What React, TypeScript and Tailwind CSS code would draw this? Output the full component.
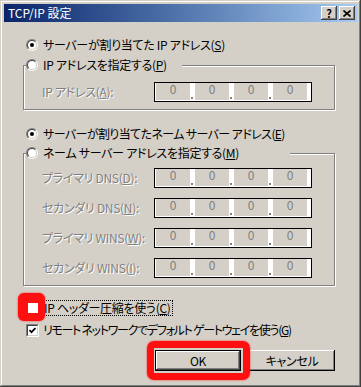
import { Fragment } from 'react';

const raised =
  'shadow-[inset_-1px_-1px_#404040,inset_1px_1px_#ffffff,inset_-2px_-2px_#808080,inset_2px_2px_#d4d0c8]';
const grayText = 'text-[#808080] [text-shadow:1px_1px_0_#ffffff]';

function Radio({ checked }: { checked?: boolean }) {
  return (
    <div className="h-[12px] w-[12px] shrink-0 rounded-full border border-t-[#808080] border-l-[#808080] border-b-white border-r-white">
      <div className="flex h-[10px] w-[10px] items-center justify-center rounded-full border border-t-[#404040] border-l-[#404040] border-b-[#d4d0c8] border-r-[#d4d0c8] bg-white">
        {checked && <div className="h-[4px] w-[4px] rounded-full bg-black" />}
      </div>
    </div>
  );
}

function Checkbox({ checked }: { checked?: boolean }) {
  return (
    <div className="h-[13px] w-[13px] shrink-0 border border-t-[#808080] border-l-[#808080] border-b-white border-r-white">
      <div className="flex h-[11px] w-[11px] items-center justify-center border border-t-[#404040] border-l-[#404040] border-b-[#d4d0c8] border-r-[#d4d0c8] bg-white">
        {checked && (
          <svg width="7" height="7" viewBox="0 0 7 7">
            <polyline points="0.5,3 2.5,5.2 6.5,1" fill="none" stroke="#000" strokeWidth="1.7" />
          </svg>
        )}
      </div>
    </div>
  );
}

function IpField() {
  return (
    <div className="flex h-[20px] w-[158px] border border-black bg-white pb-[1px] pl-[1px]">
      {[0, 1, 2, 3].map((i) => (
        <Fragment key={i}>
          {i > 0 && (
            <div className="flex w-[5px] items-end pb-[1px] pl-[1px]">
              <div className="h-[2px] w-[2px] bg-[#808080]" />
            </div>
          )}
          <div className="w-[34px] bg-[#d4d0c8] pt-[1px] text-center text-[12px] leading-[10px] tracking-normal text-[#808080]">
            0
          </div>
        </Fragment>
      ))}
    </div>
  );
}

function FieldRow({ label, k, rest }: { label: string; k: string; rest: string }) {
  return (
    <div className="flex h-[20px] items-center">
      <span className={`w-[112px] ${grayText}`}>
        {label}(<u>{k}</u>){rest}
      </span>
      <IpField />
    </div>
  );
}

export default function App() {
  return (
    <div className="flex h-[387px] w-[361px] flex-col bg-[#d4d0c8] p-[4px] font-['Noto_Sans_CJK_JP',sans-serif] text-[12px] leading-[14px] tracking-[-0.3px] text-black [font-feature-settings:'palt'] shadow-[inset_-1px_-1px_#404040,inset_1px_1px_#d4d0c8,inset_-2px_-2px_#808080,inset_2px_2px_#ffffff]">
      <div className="flex h-[18px] items-center bg-gradient-to-r from-[#0a246a] to-[#a6caf0] pl-[4px] pr-[2px]">
        <span className="flex-1 text-[12px] tracking-normal text-white">TCP/IP 設定</span>
        <div className={`flex h-[14px] w-[16px] items-center justify-center bg-[#d4d0c8] text-[11px] font-bold leading-none ${raised}`}>
          ?
        </div>
        <div className={`ml-[2px] flex h-[14px] w-[16px] items-center justify-center bg-[#d4d0c8] ${raised}`}>
          <svg width="8" height="7" viewBox="0 0 8 7">
            <path d="M0.5 0.5 L7.5 6.5 M7.5 0.5 L0.5 6.5" stroke="#000" strokeWidth="1.6" />
          </svg>
        </div>
      </div>

      <div className="flex flex-col pl-[19px]">
        <div className="ml-[3px] mt-[16px] flex h-[14px] items-center gap-[5px]">
          <Radio checked />
          <span>
            サーバーが割り当てた IP アドレス(<u>S</u>)
          </span>
        </div>

        <div className="mt-[6px] flex flex-col">
          <div className="relative -mb-[7px] ml-[3px] flex h-[14px] w-[156px] items-center gap-[5px] bg-[#d4d0c8]">
            <Radio />
            <span>
              IP アドレスを指定する(<u>P</u>)
            </span>
          </div>
          <div className="w-[312px] border border-[#808080] pb-[7px] pl-[18px] pt-[16px] shadow-[inset_1px_1px_#ffffff,1px_1px_#ffffff]">
            <FieldRow label="IP アドレス" k="A" rest=":" />
          </div>
        </div>

        <div className="ml-[3px] mt-[17px] flex h-[14px] items-center gap-[5px]">
          <Radio checked />
          <span className="tracking-[-0.6px]">
            サーバーが割り当てたネーム サーバー アドレス(<u>E</u>)
          </span>
        </div>

        <div className="mt-[5px] flex flex-col">
          <div className="relative -mb-[7px] ml-[3px] flex h-[14px] w-[264px] items-center gap-[5px] bg-[#d4d0c8]">
            <Radio />
            <span>
              ネーム サーバー アドレスを指定する(<u>M</u>)
            </span>
          </div>
          <div className="flex w-[312px] flex-col gap-[10px] border border-[#808080] pb-[7px] pl-[18px] pt-[14px] shadow-[inset_1px_1px_#ffffff,1px_1px_#ffffff]">
            <FieldRow label="プライマリ DNS" k="D" rest=":" />
            <FieldRow label="セカンダリ DNS" k="N" rest=":" />
            <FieldRow label="プライマリ WINS" k="W" rest=":" />
            <FieldRow label="セカンダリ WINS" k="I" rest=":" />
          </div>
        </div>

        <div className="ml-[3px] mt-[15px] flex h-[14px] items-center gap-[3px]">
          <div className="relative h-[13px] w-[13px]">
            <div className="absolute -left-[8px] -top-[9px] h-[28px] w-[27px] rounded-[6px] bg-[#ff1010] shadow-[0_0_2px_#ff2020]" />
            <div className="absolute left-[2px] top-[1px] h-[10px] w-[10px] bg-white" />
          </div>
          <span className="border border-dotted border-black px-[1px]">
            IP ヘッダー圧縮を使う(<u>C</u>)
          </span>
        </div>

        <div className="ml-[3px] mt-[8px] flex h-[14px] items-center gap-[4px]">
          <Checkbox checked />
          <span className="tracking-[-1.3px]">
            リモート ネットワークでデフォルト ゲートウェイを使う(<u>G</u>)
          </span>
        </div>

        <div className="ml-[132px] mt-[13px] flex gap-[8px]">
          <div className="relative">
            <div className="absolute -bottom-[9px] -left-[8px] -right-[9px] -top-[9px] rounded-[7px] border-[7px] border-[#ff1010] shadow-[0_0_2px_#ff2020]" />
            <div className="border border-black">
              <div className={`flex h-[19px] w-[84px] items-center justify-center bg-[#d4d0c8] ${raised}`}>OK</div>
            </div>
          </div>
          <div className="flex h-[21px] w-[86px] items-center justify-center bg-[#d4d0c8] shadow-[inset_-1px_-1px_#000000,inset_1px_1px_#ffffff,inset_-2px_-2px_#808080,inset_2px_2px_#d4d0c8]">
            キャンセル
          </div>
        </div>
      </div>
    </div>
  );
}
